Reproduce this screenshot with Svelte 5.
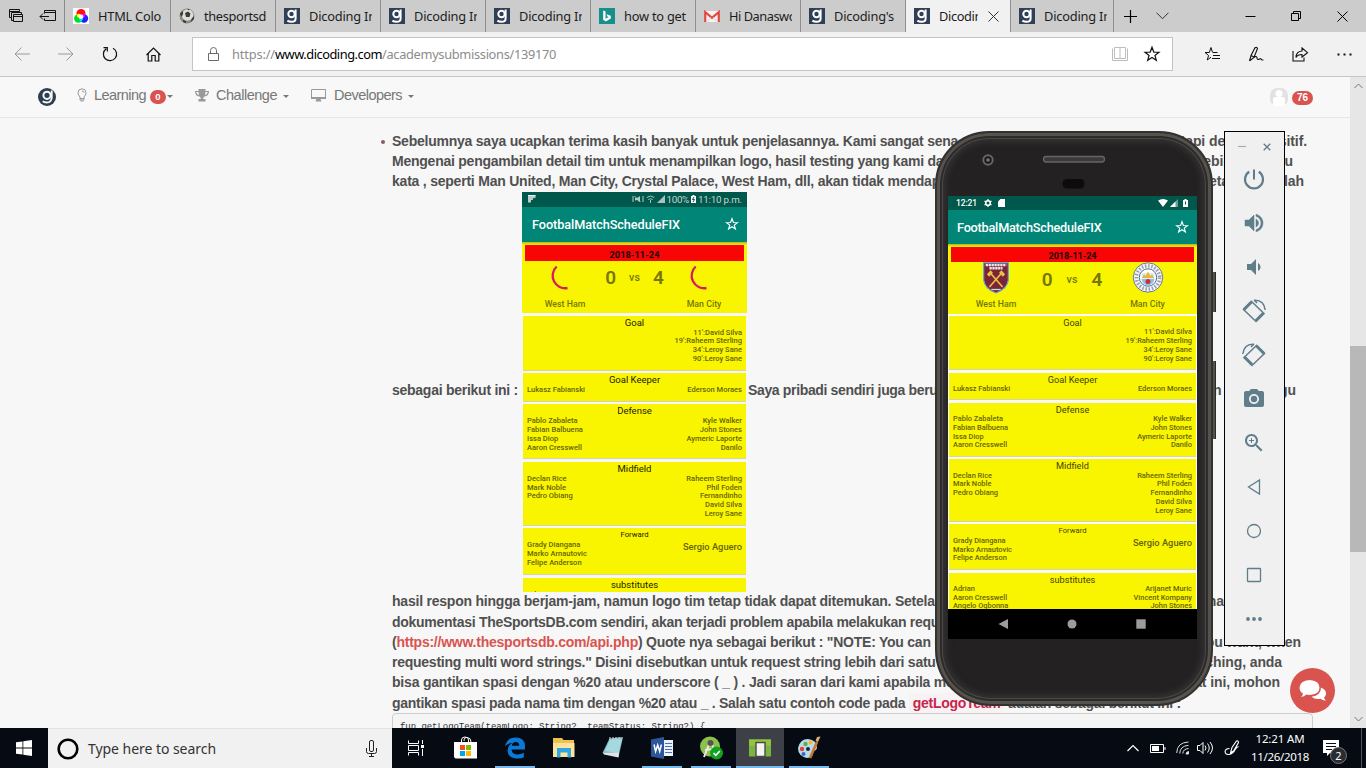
<script>
  // Spreads the letters of a label so that it fills the given width.
  function fit(node, width) {
    if (!width) return;
    const natural = node.getBoundingClientRect().width;
    node.style.letterSpacing = (width - natural) / node.textContent.length + 'px';
  }

  const tabs = [
    { icon: 'rgb', title: 'HTML Colo', w: 63, size: 106 },
    { icon: 'ball', title: 'thesportsd', w: 62 },
    { icon: 'g', title: 'Dicoding In', w: 67 },
    { icon: 'g', title: 'Dicoding In', w: 67 },
    { icon: 'g', title: 'Dicoding In', w: 67 },
    { icon: 'bing', title: 'how to get', w: 62 },
    { icon: 'mail', title: 'Hi Danaswo', w: 67 },
    { icon: 'g', title: "Dicoding's", w: 60 },
    { icon: 'g', title: 'Dicodin', w: 43, active: true },
    { icon: 'g', title: 'Dicoding In', w: 67, size: 103 }
  ];

  // Paragraph lines: the part left of the device window, and the part that ends the line.
  const before = [
    { left: 'Sebelumnya saya ucapkan terima kasih banyak untuk penjelasannya. Kami sangat sena', ls: -0.235, right: 'tetapi dengan positif.', mr: 6, bullet: true },
    { left: 'Mengenai pengambilan detail tim untuk menampilkan logo, hasil testing yang kami dap', ls: -0.24, right: 'lebih dari satu', mr: 20 },
    { left: 'kata , seperti Man United, Man City, Crystal Palace, West Ham, dll, akan tidak mendapat', ls: -0.22, right: 'detail ini adalah', mr: 9 }
  ];
  const after = [
    { left: 'hasil respon hingga berjam-jam, namun logo tim tetap tidak dapat ditemukan. Setelah', ls: -0.22, right: 'dimana', mr: 89 },
    { left: 'dokumentasi TheSportsDB.com sendiri, akan terjadi problem apabila melakukan requ', ls: -0.28 },
    { open: '(', link: 'https://www.thesportsdb.com/api.php', left: ') Quote nya sebagai berikut : "NOTE: You can use', ls: -0.24, right: 'you want, when', mr: 12 },
    { left: 'requesting multi word strings." Disini disebutkan untuk request string lebih dari satu', ls: -0.25, right: 'searching, anda', mr: 31 },
    { left: 'bisa gantikan spasi dengan %20 atau underscore ( _ ) . Jadi saran dari kami apabila me', ls: -0.2, right: 'saat ini, mohon', mr: 33 }
  ];

  const lineup = [
    { title: 'Goal', home: [], away: ["11':David Silva", "19':Raheem Sterling", "34':Leroy Sane", "90':Leroy Sane"] },
    { title: 'Goal Keeper', home: ['Lukasz Fabianski'], away: ['Ederson Moraes'] },
    { title: 'Defense', home: ['Pablo Zabaleta', 'Fabian Balbuena', 'Issa Diop', 'Aaron Cresswell'], away: ['Kyle Walker', 'John Stones', 'Aymeric Laporte', 'Danilo'] },
    { title: 'Midfield', home: ['Declan Rice', 'Mark Noble', 'Pedro Obiang'], away: ['Raheem Sterling', 'Phil Foden', 'Fernandinho', 'David Silva', 'Leroy Sane'] },
    { title: 'Forward', small: true, home: ['Grady Diangana', 'Marko Arnautovic', 'Felipe Anderson'], away: ['Sergio Aguero'] },
    { title: 'substitutes', home: ['Adrian', 'Aaron Cresswell', 'Angelo Ogbonna'], away: ['Arijanet Muric', 'Vincent Kompany', 'John Stones'] }
  ];
  const heightsA = [55, 28.5, 55, 64, 46.5, 60];
  const heightsB = [54, 27.5, 54, 62.5, 45.5, 60];

  const tools = ['power', 'volup', 'voldown', 'rotl', 'rotr', 'camera', 'zoom', 'back', 'home', 'square', 'more'];
  const apps = ['taskview', 'store', 'edge', 'explorer', 'notepad', 'word', 'studio', 'emulator', 'paint'];
  const running = ['edge', 'word', 'studio', 'emulator', 'paint'];
</script>

{#snippet favicon(kind)}
  <svg class="fav" width="16" height="16" viewBox="0 0 16 16">
    {#if kind === 'g'}
      <rect width="16" height="16" fill="#2f3f55" />
      <circle cx="7.5" cy="6" r="3.2" fill="none" stroke="#fff" stroke-width="2" />
      <path d="M11.6 1.5V10.5Q11.6 13.8 7.6 13.8Q5 13.8 3.4 12.6" fill="none" stroke="#fff" stroke-width="2" />
    {:else if kind === 'rgb'}
      <rect width="16" height="16" fill="#fff" />
      <circle cx="8" cy="5.5" r="4.5" fill="#f11" />
      <circle cx="5.3" cy="10.5" r="4.2" fill="#0d2" />
      <circle cx="11" cy="10.5" r="4.2" fill="#22f" />
      <path d="M4 6.5Q6 5 8 7L6.5 10Q3 9 4 6.5z" fill="#ff0" />
      <path d="M12 6.5Q10 5 8 7L9.5 10Q13 9 12 6.5z" fill="#f0f" />
      <path d="M6 11L8 9.5 10 11 8 14z" fill="#0ee" />
      <circle cx="8" cy="8.8" r="2.3" fill="#fff" />
    {:else if kind === 'ball'}
      <circle cx="8" cy="8" r="7.5" fill="#8b8b87" />
      <circle cx="8.5" cy="7" r="5.8" fill="#deded8" />
      <path d="M6 5l3-1.5 2.5 2L10.5 9 7 9zM0.8 6l2.5-3 1 2-1.5 4zM12.5 11l2.5-3v3l-3 3zM4 12l3 1v2.3L4 14zM8 .7l3 .5-1.500 1z" fill="#3a3c3a" />
    {:else if kind === 'bing'}
      <rect width="16" height="16" fill="#17908b" />
      <path d="M4.2 2.5V11.8L6.8 13.4 11.8 10.6V7.8L7.4 6.2 8.3 8.5 9.6 9.1 6.5 10.8V3.3z" fill="#fff" />
    {:else}
      <rect x="0" y="3" width="16" height="11" fill="#f3f0f0" />
      <path d="M1.2 14V4.2L8 9.8 14.8 4.2V14" fill="none" stroke="#dd4b42" stroke-width="2.2" />
      <path d="M3 13.5l3.5-4M13 13.5l-3.5-4" stroke="#d5d5d5" />
    {/if}
  </svg>
{/snippet}

{#snippet star(size, color, weight)}
  <svg width={size} height={size} viewBox="0 0 24 24" fill="none" stroke={color} stroke-width={weight}><path d="M12 3l2.4 6.400 6.900.3-5.400 4.200 1.900 6.600L12 16.700 6.200 20.500l1.900-6.600L2.700 9.700l6.900-.3z" /></svg>
{/snippet}

{#snippet textLine(l)}
  <div class="ln" class:bullet={l.bullet}>
    <span style="letter-spacing:{l.ls}px">{l.open ?? ''}{#if l.link}<a href="#api">{l.link}</a>{/if}{l.left}</span>
    {#if l.right}<span class="end" style="margin-right:{l.mr}px">{l.right}</span>{/if}
  </div>
{/snippet}

{#snippet spinner()}
  <svg width="38" height="30" viewBox="0 0 38 30"><path d="M10.700 3.500A12.500 12.500 0 0 0 21.500 25" fill="none" stroke="#d81b60" stroke-width="2.300" /></svg>
{/snippet}

{#snippet matchScreen(heights, loading)}
  <div class="appbar">
    <span use:fit={loading ? 148 : 144.5}>FootbalMatchScheduleFIX</span>
    {@render star(14, '#fff', 2)}
  </div>
  <div class="feed">
    <div class="score">
      <div class="date"><span use:fit={loading ? 50 : 48}>2018-11-24</span></div>
      <div class="versus">
        <div class="team">
          {#if loading}
            {@render spinner()}
          {:else}
            <svg width="30" height="32" viewBox="0 0 32 32" preserveAspectRatio="none">
              <path d="M2.800 .5H29.200V18Q28 27 16 31Q4 27 2.800 18z" fill="#7b2438" stroke="#6aa9cf" stroke-width="1.300" />
              <path d="M5 3h22M9 6.300h14" stroke="#eee8e8" stroke-width="2.500" stroke-dasharray="2.500 .6" />
              <path d="M9 25L22 11M23 25L10 11" stroke="#e8bf43" stroke-width="1.800" /><path d="M7.500 13.500l4-4M20.500 9.500l4 4" stroke="#e8bf43" stroke-width="3.500" />
              <path d="M11 27.500h10" stroke="#cbd8e4" stroke-width="1.300" />
            </svg>
          {/if}
          <b>West Ham</b>
        </div>
        <div class="goals"><strong>0</strong><b>vs</b><strong>4</strong></div>
        <div class="team">
          {#if loading}
            {@render spinner()}
          {:else}
            <svg width="32" height="32" viewBox="0 0 32 32">
              <circle cx="16" cy="15.500" r="14.700" fill="#f4f6f8" stroke="#667993" stroke-width="1" />
              <circle cx="16" cy="15.500" r="11.600" fill="none" stroke="#6f7889" stroke-width="3.500" stroke-dasharray="1.500 1.700" opacity=".7" />
              <circle cx="16" cy="15.500" r="8.700" fill="#fff" stroke="#506d91" />
              <path d="M9.500 11h13v6h-13z" fill="#d9edf8" /><path d="M10 16l2-4 1.500 2L16 9.500 18.500 14l1.500-2 2 4z" fill="#e9b53e" />
              <path d="M9.500 17h13q-.5 5-6.500 7-6-2-6.500-7z" fill="#8ac4e5" /><circle cx="16" cy="19.500" r="2.500" fill="#d22c38" />
            </svg>
          {/if}
          <b>Man City</b>
        </div>
      </div>
    </div>
    {#each lineup as group, i}
      <div class="card" style="height:{heights[i]}px">
        <div class="ctitle" class:small={group.small}>{group.title}</div>
        <div class="names">
          <div>{#each group.home as n}<p>{n}</p>{/each}</div>
          <div class="away" class:big={group.small}>{#each group.away as n}<p>{n}</p>{/each}</div>
        </div>
      </div>
    {/each}
  </div>
{/snippet}

<main>
  <header class="tabs">
    <div class="tabtools">
      <svg width="16" height="16" viewBox="0 0 16 16" fill="none" stroke="#111"><path d="M3.500 9.500h-2v-8h10v2M1.500 3.500h10M5.500 12.500h-2v-8h10v2" /><path d="M5.500 6.500h9v7h-9zM5.500 8.500h9" /></svg>
      <svg width="17" height="14" viewBox="0 0 17 14" fill="none" stroke="#111"><path d="M5.500 4.500v-3h11v10h-11v-2M5.500 3.500h11M1 7.500h9M4 4.500l-3 3 3 3" /></svg>
    </div>
    {#each tabs as t}
      <div class="tab" class:active={t.active} style="width:{t.size ?? 105}px">
        {@render favicon(t.icon)}
        <div class="clip"><span use:fit={t.w}>{t.title}</span></div>
        {#if t.active}<svg class="x" width="11" height="11" viewBox="0 0 11 11" stroke="#333"><path d="M.5 .5l10 10M10.500 .5l-10 10" /></svg>{/if}
      </div>
    {/each}
    <svg class="plus" width="13" height="13" viewBox="0 0 13 13" stroke="#000" stroke-width="1.200"><path d="M6.500 0v13M0 6.500h13" /></svg>
    <svg class="down" width="13" height="8" viewBox="0 0 13 8" fill="none" stroke="#333"><path d="M.5 .7l6 6 6-6" /></svg>
    <div class="win">
      <svg width="11" height="11" viewBox="0 0 11 11" stroke="#000"><path d="M.5 5.500h10" /></svg>
      <svg width="11" height="11" viewBox="0 0 11 11" stroke="#000" fill="none"><path d="M.5 2.500h7v7h-7zM2.500 2.500v-2h7v7h-2" /></svg>
      <svg width="11" height="11" viewBox="0 0 11 11" stroke="#000"><path d="M.5 .5l10 10M10.500 .5l-10 10" /></svg>
    </div>
  </header>

  <div class="toolbar">
    <div class="btns">
      <i><svg width="16" height="14" viewBox="0 0 16 14" fill="none" stroke="#999"><path d="M1 7h15M7.500 .5L1 7l6.500 6.500" /></svg></i>
      <i><svg width="16" height="14" viewBox="0 0 16 14" fill="none" stroke="#999"><path d="M0 7h15M8.500 .5L15 7l-6.500 6.500" /></svg></i>
      <i><svg width="16" height="16" viewBox="0 0 16 16" fill="none" stroke="#111" stroke-width="1.200"><path d="M11 2.200A6.600 6.600 0 1 1 4.200 2.700M1.500 1.600h3.800v3.800" /></svg></i>
      <i><svg width="16" height="16" viewBox="0 0 16 16" fill="none" stroke="#111" stroke-width="1.200"><path d="M.5 9l7-7 7 7M2.200 7.500V15h3.600V9.500h3.400V15h3.600V7.500" /></svg></i>
    </div>
    <div class="address">
      <svg width="11" height="14" viewBox="0 0 11 14" fill="none" stroke="#6a6a6a"><path d="M.5 6.500h10v7H.5zM2.500 6.500V3.500a3 3 0 0 1 6 0v3" /></svg>
      <div class="url"><span use:fit={43}>https://</span><span class="host" use:fit={107}>www.dicoding.com</span><span use:fit={174}>/academysubmissions/139170</span></div>
      <svg class="book" width="16" height="16" viewBox="0 0 16 16" fill="none" stroke="#bcbcbc"><path d="M2.500 1.500h5.500v11H2.500zM8 1.500h5.500v11H8M.5 2.500v12h15v-12" /></svg>
      {@render star(18, '#111', 1.6)}
    </div>
    <div class="btns right">
      <i><svg width="17" height="16" viewBox="0 0 17 16" fill="none" stroke="#111"><path d="M8.500 6.500L7 1.500 5.300 6.500H1l3.600 3L3.200 14 7 11.200M9 6.500h4.500M9 9.500h7M8 12.500h8" /></svg></i>
      <i><svg width="17" height="16" viewBox="0 0 17 16" fill="none" stroke="#111" stroke-width="1.100"><path d="M1.500 15L3 9.500 7 1.700q2-1 2.500.8L6 11.500l-4 3M3 9.500l3 1.500M6 11.500q2-2 3 0 0 3 2.500 1.500 1.500-1 2 .7l2 .3" /></svg></i>
      <i><svg width="17" height="15" viewBox="0 0 17 15" fill="none" stroke="#111" stroke-width="1.100"><path d="M1 4v10h11v-3.500M10 1l5.500 4.700L10 10V7.500Q5.500 7.500 4 10.500q0-6 6-6.500z" /></svg></i>
      <i><svg width="15" height="3" viewBox="0 0 15 3"><path d="M.5 .5h2v2h-2zM6.500 .5h2v2h-2zM12.500 .5h2v2h-2z" fill="#111" /></svg></i>
    </div>
  </div>

  <section class="page">
    <div class="content">
      <nav>
        <svg class="logo" width="18" height="18" viewBox="0 0 18 18"><circle cx="9" cy="9" r="9" fill="#2d3e50" /><circle cx="9" cy="7.300" r="3.600" fill="none" stroke="#f8f8f8" stroke-width="2" /><path d="M13.700 2.500v7.500q-.5 4.500-5 4.500-2.500 0-4-1.200" fill="none" stroke="#f8f8f8" stroke-width="1.900" /></svg>
        <svg class="bulb" width="10" height="14" viewBox="0 0 10 14" fill="none" stroke="#999"><path d="M3 9Q1 7 1 4.800a4 4 0 0 1 8 0Q9 7 7 9v3H3zM3 10.500h4M5 3q1.800 0 2 1.700" /><path d="M3.500 13h3" /></svg>
        <span use:fit={52}>Learning</span><em>0</em><u></u>
        <svg class="trophy" width="14" height="13" viewBox="0 0 14 13"><path d="M3.500 0h7v2H14Q14 7 9.500 7.500 8 8.500 8 10h2.500v2.500h-7V10H6Q6 8.500 4.500 7.500 0 7 0 2h3.500zM1.200 3Q1.700 5.500 4 6.200L3.500 3zM12.800 3h-2.300L10 6.200Q12.300 5.500 12.800 3z" fill="#999" /></svg>
        <span use:fit={61}>Challenge</span><u class="gap"></u>
        <svg class="monitor" width="15" height="13" viewBox="0 0 15 13"><path d="M.5 .5h14v9H.5z" fill="none" stroke="#999" /><path d="M0 8h15v2H0zM5.500 10h4l1 2.500h-6z" fill="#999" /></svg>
        <span use:fit={68}>Developers</span><u class="gap"></u>
        <svg class="avatar" width="18" height="18" viewBox="0 0 18 18"><rect width="18" height="18" rx="7" fill="#e2e2e2" /><circle cx="9" cy="5.600" r="3.500" fill="#fff" /><path d="M3 18v-6.500Q3 9 6 9h6q3 0 3 2.500V18z" fill="#fff" /></svg>
        <em class="count">76</em>
      </nav>
      <article>
        {#each before as l}{@render textLine(l)}{/each}
        <div class="ln shotrow">
          <span class="lift" use:fit={126}>sebagai berikut ini :</span>
          <div class="shot">
            <div class="status">
              <svg width="8" height="8" viewBox="0 0 8 8"><path d="M0 0h7.500v3H5v2H3v2.500H0z" fill="#b9cfcc" /><path d="M0 0h7.500v1H0z" fill="#e6efee" /></svg>
              <div>
                <svg width="12" height="8" viewBox="0 0 12 8" fill="none" stroke="#b4cbc8"><path d="M1 1v6M11 1v6M2.500 1l6 6" /><path d="M3 5.500V3h2l3-2v6L5 5z" fill="#b4cbc8" stroke="none" /></svg>
                <svg width="9" height="8" viewBox="0 0 9 8" fill="none" stroke="#a8c4c0"><path d="M.7 2.500q3.800-3 7.600 0M2.300 4.500q2.200-1.500 4.400 0M4.500 5v3" /></svg>
                <svg width="8" height="8" viewBox="0 0 8 8"><path d="M8 0v8H0z" fill="#a8c4c0" /></svg>
                <span use:fit={22.500}>100%</span>
                <svg width="5" height="8" viewBox="0 0 5 8"><path d="M0 1h1.500V0h2v1H5v7H0z" fill="#fff" /><path d="M3 2L1.500 4.500h2L2 7" stroke="#00574b" fill="none" /></svg>
                <span use:fit={44}>11:10 p.m.</span>
              </div>
            </div>
            {@render matchScreen(heightsA, true)}
          </div>
          <span class="lift" style="letter-spacing:-.35px">Saya pribadi sendiri juga berul</span><span class="end lift" style="margin-right:17px">bahkan menunggu</span>
        </div>
        {#each after as l}{@render textLine(l)}{/each}
        <div class="ln"><span style="letter-spacing:-.28px">gantikan spasi pada nama tim dengan %20 atau _ . Salah satu contoh code pada <code>getLogoTeam</code> <span use:fit={165}>adalah sebagai berikut ini :</span></span></div>
        <pre><span use:fit={305}>fun getLogoTeam(teamLogo: String?, teamStatus: String?) &#123;</span></pre>
      </article>
    </div>
    <div class="scroll">
      <svg width="9" height="6" viewBox="0 0 9 6" fill="none" stroke="#777"><path d="M.5 5l4-4 4 4" /></svg>
      <div class="thumb"></div>
      <svg width="9" height="6" viewBox="0 0 9 6" fill="none" stroke="#777"><path d="M.5 1l4 4 4-4" /></svg>
    </div>
  </section>

  <footer>
    <div class="start"><svg width="16" height="16" viewBox="0 0 16 16" fill="#fff"><path d="M0 2.300L6.500 1.400V7.600H0zM7.300 1.300L16 0V7.600H7.300zM0 8.400h6.500v6.200L0 13.700zM7.300 8.400H16V16L7.300 14.700z" /></svg></div>
    <div class="search">
      <svg width="22" height="22" viewBox="0 0 22 22"><circle cx="11" cy="11" r="9.300" fill="none" stroke="#000" stroke-width="2.600" /></svg>
      <span use:fit={128}>Type here to search</span>
      <svg class="mic" width="11" height="17" viewBox="0 0 11 17" fill="none" stroke="#222"><rect x="3.500" y=".5" width="4" height="11" rx="1.500" /><path d="M.5 8v3.500q0 2 2 2h6q2 0 2-2V8M5.500 13.500v3M3 16.500h5" /></svg>
    </div>
    {#each apps as a}
      <div class="app" class:run={running.includes(a)} class:cur={a === 'emulator'}>
        <svg width="24" height="24" viewBox="0 0 24 24">
          {#if a === 'taskview'}
            <path d="M3.500 4.500v3h10v-3M3.500 19.500v-3h10v3M3.500 9.500h10v5h-10zM17.500 4v4M17.500 13v7" fill="none" stroke="#fff" /><path d="M16 9h3v3h-3z" fill="#fff" />
          {:else if a === 'store'}
            <path d="M0 6h23v16.500H1.500L0 21z" fill="#fff" /><path d="M7.500 7V4q0-3 3.500-3t3.500 3v3M10 5q0-4 3.500-3.500T17 6" fill="none" stroke="#fff" /><path d="M6 9h5v5H6z" fill="#f25022" /><path d="M12 9h5v5h-5z" fill="#7fba00" /><path d="M6 15h5v5H6z" fill="#00a4ef" /><path d="M12 15h5v5h-5z" fill="#ffb900" />
          {:else if a === 'edge'}
            <path d="M2 10.500Q4 1.500 12.500 1.500q9.500 0 9.500 9v3H8.500q.5 5 6 5 3.500 0 6.300-1.800v4.500Q18 22.800 13.500 22.500 5 22 4.500 14.500q0-5 5-7.500Q4.500 7.300 2 10.500zM8.800 9.700h7.500q-.2-3.700-3.500-3.700-3.500 0-4 3.700z" fill="#0a7ad8" />
          {:else if a === 'explorer'}
            <path d="M1 2h9l1.500 2H22v17H1z" fill="#f0c14c" /><path d="M1 7h21.500v14H1z" fill="#fde49a" /><path d="M5 12h14v9.500h-3.500v-5h-7v5H5z" fill="#2fa7e0" />
          {:else if a === 'notepad'}
            <path d="M8.500 2.500L22 1l-4.500 20L1.500 17z" fill="#86bfc9" /><path d="M9 4l12-1-3.500 14L4 15z" fill="#a5d9df" /><path d="M2 17l16-.5-.5 5L3 18.500z" fill="#dfe5e6" /><path d="M9 1v3M12 1v3M15 1v3M18 1v2" stroke="#d8dddd" />
          {:else if a === 'word'}
            <path d="M13 4h10v16H13z" fill="#eef2fa" /><path d="M15 7.500h7M15 10.500h7M15 13.500h7M15 16.500h7" stroke="#4b73bb" /><path d="M1 3.500L14 1v22L1 20.500z" fill="#2b579a" /><path d="M4 8.500l1.600 7L7.700 9l2 6.500 1.700-7" fill="none" stroke="#fff" stroke-width="1.500" />
          {:else if a === 'studio'}
            <circle cx="11" cy="10.500" r="10" fill="#8cc04a" /><path d="M11 6L5 21M12 6l5 12M6 14l9-1" stroke="#e9ebe9" stroke-width="2" /><circle cx="11.500" cy="7" r="3" fill="#555" /><circle cx="17.500" cy="17" r="6.500" fill="#11a31d" /><path d="M14.500 17l2.300 2.300 4-4.300" fill="none" stroke="#fff" stroke-width="1.700" />
          {:else if a === 'emulator'}
            <path d="M1 3.500h22v17H1z" fill="#7cb342" /><path d="M1 3.500h22v6H1z" fill="#94c43e" /><path d="M8 6.500h9v14H8z" fill="#f4f4f4" stroke="#4a4a4a" stroke-width="1.400" />
          {:else}
            <path d="M11 3Q20 4 20 12q-1 3-4 3 1 7-6 7Q1 20 1 12 3 3 11 3z" fill="#b9dcec" /><circle cx="5" cy="13" r="2.200" fill="#df4040" /><circle cx="8.500" cy="8" r="2.200" fill="#65ae3d" /><circle cx="13.500" cy="6.500" r="2" fill="#f4b82f" /><circle cx="6.500" cy="18" r="2" fill="#3767c0" /><circle cx="11" cy="13" r="2" fill="#1b2834" /><path d="M13 22L20 6" stroke="#ca762c" stroke-width="2.600" /><path d="M18.500 5L20 1l3.500-.5L21 6z" fill="#d9ac76" />
          {/if}
        </svg>
      </div>
    {/each}
    <div class="tray">
      <svg width="12" height="8" viewBox="0 0 12 8" fill="none" stroke="#fff" stroke-width="1.200"><path d="M.5 7L6 1.500 11.500 7" /></svg>
      <svg style="margin-left:11px" width="16" height="9" viewBox="0 0 16 9"><path d="M.5 .5h13v8H.5zM15 3v3" fill="none" stroke="#fff" /><path d="M2 2h7v5H2z" fill="#fff" /></svg>
      <svg style="margin-left:10px" width="14" height="14" viewBox="0 0 14 14" fill="none" stroke="#ddd"><path d="M.7 12Q1 1.500 12.500 1M3.700 12.500Q4 5 12.500 4.300M6.800 12.500q.2-4.500 5.700-5" /><path d="M10 13q0-2 2.500-2.500V13z" fill="#fff" /></svg>
      <svg style="margin-left:7px" width="17" height="14" viewBox="0 0 17 14" fill="none" stroke="#fff"><path d="M.5 4.500h2.500L6 1.500v11l-3-3H.5zM8 4.500q2 2.500 0 5M10.500 2.500q3.500 4.500 0 9M13 1q5 6 0 12" /></svg>
      <svg style="margin-left:10px" width="18" height="18" viewBox="0 0 18 18" fill="none" stroke="#fff" stroke-width="1.100"><path d="M6.500 14L8 8.500 12.500 2q2-.5 2 1.500L9.500 12zM5.500 9.500q-4 0-4.500 3 .5 3.500 4 3 4-.5 6.500-5.500 1.500-2 3-2.500" /></svg>
      <div class="clock"><span use:fit={49}>12:21 AM</span><span use:fit={58}>11/26/2018</span></div>
      <div class="notif"><svg width="16" height="16" viewBox="0 0 16 16"><path d="M0 0h16v13H7l-3 3v-3H0z" fill="#fff" /><path d="M3 3.500h10M3 6.500h10M3 9.500h6" stroke="#0a0d14" /></svg><b>2</b></div>
      <div class="peek"></div>
    </div>
  </footer>

  <div class="chat"><svg width="28" height="24" viewBox="0 0 28 24" fill="#fff"><path d="M22 8.500q5 2 5 6 0 2.500-2 4 .5 1.800 2 3-3.500.2-5.500-1.700-5.500 1-9-2Q22 16.500 22 8.500z" /><path d="M10.500 1Q20.500 1.500 20.500 8.500T10.500 16q-1.800 0-3-.4Q5 18 2 18q1.700-1.500 2-3.500Q.5 12.500 .5 8.500 1 1.500 10.500 1z" /></svg></div>

  <div class="device">
    <div class="key k1"></div><div class="key k2"></div>
    <div class="shell">
      <div class="top">
        <svg width="260" height="60" viewBox="3 -1 260 60"><circle cx="43" cy="24" r="4.700" fill="#1b1a1b" stroke="#666" stroke-width="2" /><circle cx="43" cy="24" r="1.800" fill="#777" /><rect x="98.500" y="20.500" width="61" height="5.500" rx="2.700" fill="#3b3939" stroke="#666" stroke-width="1.300" /><rect x="117.500" y="43" width="22" height="9.500" rx="4.500" fill="#0d0c0d" /></svg>
      </div>
      <div class="screen">
        <div class="status">
          <div><span use:fit={21}>12:21</span>
            <svg style="margin-left:5px" width="8" height="8" viewBox="0 0 8 8"><circle cx="4" cy="4" r="2.300" fill="none" stroke="#fff" stroke-width="1.600" /><path d="M4 0v1.500M4 6.500V8M.5 2l1.500 1M6 5l1.500 1M.5 6L2 5M6 3l1.500-1" stroke="#fff" stroke-width="1.200" /></svg>
            <svg style="margin-left:4px" width="7" height="8" viewBox="0 0 7 8"><path d="M2.500 0H7v8H0V2.500z" fill="#fff" /></svg>
          </div>
          <div>
            <svg width="10" height="8" viewBox="0 0 10 8"><path d="M0 1.500q5-3 10 0L5 8z" fill="#fff" /></svg>
            <svg width="8" height="8" viewBox="0 0 8 8"><path d="M8 0v8H0z" fill="#6d9d95" /><path d="M5.500 2.500V8H0z" fill="#fff" /></svg>
            <svg style="margin-left:3px" width="5" height="8" viewBox="0 0 5 8"><path d="M0 1h1.500V0h2v1H5v7H0z" fill="#fff" /><path d="M2.500 2.500v3" stroke="#00574b" /></svg>
          </div>
        </div>
        {@render matchScreen(heightsB, false)}
        <div class="softkeys">
          <svg width="10" height="10" viewBox="0 0 10 10"><path d="M10 0v10L.5 5z" fill="#9c9c9c" /></svg>
          <svg width="10" height="10" viewBox="0 0 10 10"><circle cx="5" cy="5" r="4.500" fill="#9c9c9c" /></svg>
          <svg width="10" height="10" viewBox="0 0 10 10"><path d="M.3 .3h9.400v9.400H.3z" fill="#9c9c9c" /></svg>
        </div>
      </div>
    </div>
  </div>

  <aside>
    <div class="ctl">
      <svg width="8" height="8" viewBox="0 0 8 8" stroke="#9db0b9" stroke-width="1.200"><path d="M0 3.500h8" /></svg>
      <svg width="8" height="8" viewBox="0 0 8 8" stroke="#607d8b" stroke-width="1.300"><path d="M.7 .7l6.600 6.600M7.300 .7L.7 7.300" /></svg>
    </div>
    {#each tools as t}
      <div class="tool">
        <svg width="24" height="24" viewBox="0 0 24 24" fill="#607d8b">
          {#if t === 'power'}<path d="M13 2.500h-2v10h2z" /><path d="M16.800 4.800a9 9 0 1 1-9.600 0" fill="none" stroke="#607d8b" stroke-width="2.200" />
          {:else if t === 'volup'}<path d="M3 9v6h4l5 5V4L7 9H3zm13.500 3c0-1.770-1.020-3.290-2.500-4.030v8.050c1.480-.73 2.500-2.250 2.500-4.020zM14 3.230v2.060c2.890.86 5 3.540 5 6.710s-2.110 5.850-5 6.710v2.060c4.010-.91 7-4.490 7-8.770s-2.990-7.860-7-8.770z" stroke="#607d8b" stroke-width=".5" />
          {:else if t === 'voldown'}<path d="M18.500 12c0-1.770-1.020-3.290-2.500-4.030v8.050c1.480-.73 2.500-2.250 2.500-4.020zM5 9v6h4l5 5V4L9 9H5z" />
          {:else if t === 'rotl' || t === 'rotr'}
            <g transform={t === 'rotr' ? 'translate(24 0) scale(-1 1)' : ''} fill="none" stroke="#607d8b"><path d="M9.500 2.500L1.500 10.500 14 22.500l8-8z" stroke-width="1.500" /><path d="M10 2.500L2 10.500M21.500 14L14 21.500" stroke-width="3" /><path d="M12 1.200Q22 .5 23.200 11M12 1l3 3" stroke-width="1.500" /></g>
          {:else if t === 'camera'}<path d="M9 2L7.170 4H4c-1.100 0-2 .9-2 2v12c0 1.100.9 2 2 2h16c1.100 0 2-.9 2-2V6c0-1.100-.9-2-2-2h-3.170L15 2H9zm3 15c-2.760 0-5-2.240-5-5s2.240-5 5-5 5 2.240 5 5-2.240 5-5 5z" /><circle cx="12" cy="12" r="3.200" />
          {:else if t === 'zoom'}<path d="M15.500 14h-.79l-.28-.27C15.410 12.590 16 11.110 16 9.500 16 5.910 13.090 3 9.500 3S3 5.910 3 9.500 5.910 16 9.500 16c1.610 0 3.090-.59 4.230-1.570l.27.28v.79l5 4.990L20.490 19l-4.990-5zm-6 0C7.010 14 5 11.990 5 9.500S7.010 5 9.500 5 14 7.010 14 9.500 11.990 14 9.500 14zM9 7h1v2h2v1h-2v2H9v-2H7V9h2z" />
          {:else if t === 'back'}<path d="M17.500 5v14L6.500 12z" fill="none" stroke="#607d8b" stroke-width="1.300" />
          {:else if t === 'home'}<circle cx="12" cy="12" r="6.500" fill="none" stroke="#607d8b" stroke-width="1.300" />
          {:else if t === 'square'}<rect x="5.500" y="5.500" width="13" height="13" rx=".5" fill="none" stroke="#607d8b" stroke-width="1.300" />
          {:else}<circle cx="6" cy="12" r="1.900" /><circle cx="12" cy="12" r="1.900" /><circle cx="18" cy="12" r="1.900" />{/if}
        </svg>
      </div>
    {/each}
  </aside>
</main>

<style>
  :global(body) { margin: 0; }
  main { position: relative; width: 1366px; height: 768px; overflow: hidden; background: #f7f7f7; font-family: "Noto Sans", sans-serif; display: flex; flex-direction: column; }
  main * { box-sizing: border-box; }
  svg { display: block; flex: none; }
  span { white-space: nowrap; display: inline-block; flex: none; }
  p { margin: 0; }

  .tabs { height: 32px; flex: none; background: #ccc; display: flex; align-items: center; }
  .tabtools { width: 65px; height: 32px; border-right: 1px solid #8a8a8a; display: flex; align-items: center; gap: 15px; padding-left: 8px; }
  .tab { height: 32px; flex: none; display: flex; align-items: center; padding-left: 8px; border-right: 1px solid #8f8f8f; font-size: 12.800px; color: #1c1c1c; }
  .tab.active { background: #f1f1f1; }
  .clip { width: 63px; margin-left: 9px; overflow: hidden; line-height: 20px; height: 20px; }
  .active .clip { width: 39px; margin-right: 1px; }
  .x { margin-left: 9px; }
  .plus { margin-left: 10px; }
  .down { margin-left: 19px; }
  .win { margin-left: auto; display: flex; gap: 35px; padding-right: 18px; }

  .toolbar { height: 45px; flex: none; background: #f1f1f1; border-bottom: 1px solid #c6c6c6; display: flex; align-items: center; }
  .btns { display: flex; }
  .btns i { width: 44px; height: 44px; display: flex; align-items: center; justify-content: center; }
  .btns.right { margin-left: 17px; }
  .address { margin-left: 16px; width: 982px; height: 34px; border: 1px solid #c4c4c4; background: #fff; display: flex; align-items: center; padding: 0 11px 0 15px; }
  .url { margin-left: 13px; font-size: 12.800px; color: #8c8c8c; display: flex; flex: 1; }
  .host { color: #000; }
  .book { margin-right: 15px; }

  .page { height: 651px; flex: none; display: flex; overflow: hidden; }
  .content { width: 1350px; display: flex; flex-direction: column; overflow: hidden; }
  .scroll { width: 16px; background: #e6e6e6; display: flex; flex-direction: column; align-items: center; padding: 6px 0; }
  .thumb { width: 16px; height: 206px; background: #b8b8b8; margin: 257px 0 auto; }
  nav { height: 41px; flex: none; background: #f8f8f8; border-bottom: 1px solid #e7e7e7; display: flex; align-items: center; padding: 0 37px 4px 38px; font: 14.500px "Liberation Sans", sans-serif; color: #777; }
  .logo { margin-top: 3px; }
  .bulb { margin: 0 7px 0 21px; }
  .trophy { margin: 0 7px 0 22px; }
  .monitor { margin: 0 8px 0 22px; }
  .avatar { margin-left: auto; margin-top: 4px; }
  em { margin: 3px 0 0 4px; width: 16px; height: 14px; border-radius: 7px; background: #d9534f; color: #fff; font: bold 9.500px/14px "Liberation Sans", sans-serif; text-align: center; }
  em.count { width: 21px; margin-top: 5px; font-size: 10px; }
  u { margin: 3px 0 0 1px; border: 3px solid transparent; border-top-color: #777; border-bottom: 0; }
  u.gap { margin-left: 6px; }

  article { padding: 12.700px 37px 0 392px; font: bold 14px/20.300px "Liberation Sans", sans-serif; color: #505050; }
  .ln { display: flex; align-items: center; height: 20.300px; white-space: nowrap; }
  .end { margin-left: auto; letter-spacing: -.1px; }
  .bullet::before { content: ""; width: 4px; height: 4px; margin: 2px 7px 0 -11px; border-radius: 2px; background: #8d5d5d; flex: none; }
  .shotrow { height: 400px; margin: .4px 0 -.7px; }
  .lift { margin-top: -3px; }
  a { color: #d9534f; text-decoration: none; }
  code { font: inherit; color: #c7254e; background: #f9f2f4; padding: 2px 4px; border-radius: 4px; }
  pre { margin: 0; height: 40px; border: 1px solid #ccc; border-radius: 4px; background: #f5f5f5; padding: 7px; font: 9px/13px "Liberation Mono", monospace; color: #333; }

  .shot, .screen { font-family: Roboto, sans-serif; display: flex; flex-direction: column; overflow: hidden; flex: none; font-weight: 400; line-height: normal; letter-spacing: 0; }
  .shot { width: 225px; height: 400px; margin: 0 1px 0 4px; }
  .screen { width: 249px; height: 443px; background: #fff; }
  .status { height: 15px; flex: none; background: #00574b; color: #c4d6d3; display: flex; justify-content: space-between; align-items: center; padding: 0 5px 0 6px; font-size: 9.800px; }
  .status div { display: flex; align-items: center; gap: 2px; }
  .screen .status { height: 14px; color: #fff; font-size: 8.500px; font-weight: 500; padding: 0 9px 0 8px; }
  .appbar { height: 35px; flex: none; background: #008577; color: #fff; display: flex; align-items: center; justify-content: space-between; padding: 0 8px 0 10px; font-size: 12.700px; font-weight: 500; }
  .screen .appbar { height: 34px; padding: 0 8px 0 9px; }
  .feed { flex: 1; overflow: hidden; min-height: 0; display: flex; flex-direction: column; gap: 2.600px; padding: 0 1px; }
  .screen .feed { background: #fafafa; }
  .score { flex: none; height: 71px; margin: 0 -1px; background: linear-gradient(#b9b51b, #f9f500 3px); padding: 3px 3px 0; }
  .screen .score { height: 69.500px; }
  .date { height: 16px; background: #f80505; color: #180606; font-size: 9.200px; font-weight: 700; display: flex; justify-content: center; align-items: flex-end; line-height: 12px; }
  .screen .date { height: 15px; }
  .versus { display: grid; grid-template-columns: 80px 1fr 80px; color: #77760a; }
  .screen .versus { grid-template-columns: 90px 1fr 93px; }
  .team { display: flex; flex-direction: column; align-items: center; font-size: 8.800px; }
  .team b { font-weight: 500; margin-top: 6px; line-height: 11px; }
  .screen .team b { margin-top: 5px; }
  .shot .team svg { margin-top: 2px; }
  .goals { display: flex; justify-content: center; align-items: center; gap: 13px; height: 34px; font-size: 10.700px; }
  .screen .goals { height: 35px; margin-right: -2px; gap: 14px; }
  .goals strong { font-size: 19px; font-weight: 600; }
  .goals b { font-weight: 500; }
  .card { flex: none; background: #f9f500; border-bottom: 1px solid #d6d5a0; padding: 1px 4px 0; }
  .ctitle { text-align: center; font-size: 9.500px; line-height: 12px; height: 12px; color: #222005; }
  .screen .ctitle { font-size: 9.200px; color: #45430a; height: 11.300px; }
  .ctitle.small, .screen .ctitle.small { font-size: 7.700px; }
  .names { display: flex; justify-content: space-between; color: #66640a; font-size: 7.550px; font-weight: 500; line-height: 8.750px; }
  .screen .names { font-size: 7.450px; }
  .away { text-align: right; }
  .away.big, .screen .away.big { font-size: 9.300px; line-height: 12px; }

  .device { position: absolute; left: 935px; top: 131px; width: 281px; height: 576px; }
  .shell { position: relative; width: 278px; height: 575px; border-radius: 54px 54px 56px 56px; background: #232122; border: 2px solid #34322f; box-shadow: inset 0 0 0 3px #56534f, inset 0 0 0 5px #2c2a2a, inset 0 0 0 6px #4a4846, inset 0 0 6px 9px #343233; padding-left: 11px; }
  .top { height: 63px; padding-top: 2px; }
  .key { position: absolute; right: 0; width: 5px; background: #55524e; border-right: 1px solid #2d2b29; }
  .k1 { top: 141px; height: 40px; }
  .k2 { top: 230px; height: 78px; }
  .softkeys { height: 30px; flex: none; background: #000; display: flex; justify-content: center; align-items: center; gap: 59px; padding-right: 2px; }

  aside { position: absolute; left: 1224px; top: 131px; width: 61px; height: 515px; background: #f0f0f0; border: 1px solid #000; }
  .ctl { height: 25px; display: flex; justify-content: center; align-items: center; gap: 17px; padding: 4px 0 0 0; }
  .tool { height: 44px; display: flex; align-items: center; justify-content: center; padding-right: 1px; }
  .chat { position: absolute; left: 1290px; top: 668px; width: 45px; height: 45px; border-radius: 50%; background: #d9534f; display: flex; align-items: center; justify-content: center; }

  footer { height: 40px; flex: none; background: #060b13; display: flex; color: #fff; }
  .start { width: 48px; display: flex; align-items: center; justify-content: center; }
  .search { width: 344px; background: #f1f1f1; border-top: 1px solid #e2e2e2; display: flex; align-items: center; padding-left: 9px; color: #333; font-size: 14px; }
  .search span { margin-left: 9px; }
  .mic { margin: 0 15px 0 auto; }
  .app { width: 49px; display: flex; align-items: center; justify-content: center; flex: none; padding-left: 1px; }
  .app.run { background: linear-gradient(#76b9ed, #76b9ed) center bottom / 40px 2px no-repeat; }
  .app.cur { background: linear-gradient(#76b9ed, #76b9ed) center bottom / 48px 2px no-repeat, linear-gradient(#3d4147, #3d4147) right / 48px 40px no-repeat; }
  .tray { margin-left: auto; width: 239px; display: flex; align-items: center; }
  .clock { width: 66px; margin-left: 5px; display: flex; flex-direction: column; align-items: center; font-size: 11.500px; line-height: 18px; }
  .notif { position: relative; margin-left: 10px; }
  .notif b { position: absolute; left: 7px; top: 7px; width: 17px; height: 17px; border-radius: 9px; background: #292c31; border: 1px solid #777; font: 11px/15px "Noto Sans", sans-serif; text-align: center; }
  .peek { width: 1px; height: 40px; background: #50545a; margin-left: auto; margin-right: 4px; }
</style>
